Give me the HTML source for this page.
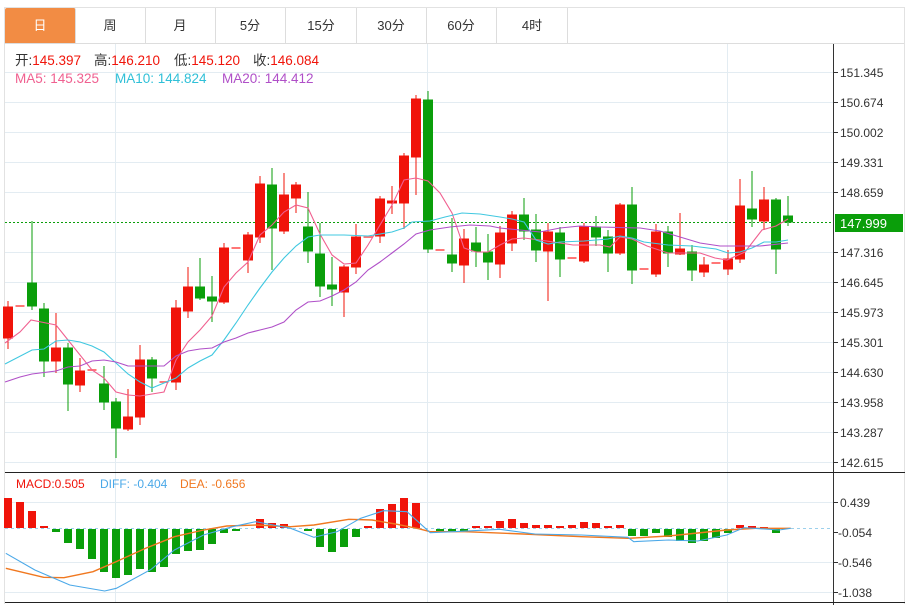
<!DOCTYPE html>
<html><head><meta charset="utf-8"><style>
body{margin:0;background:#fff;width:907px;height:605px;overflow:hidden;font-family:"Liberation Sans","Noto Sans CJK SC",sans-serif}
.tab{position:absolute;top:8px;height:35px;width:70px;border-right:1px solid #ddd;text-align:center;line-height:35px;font-size:13px;color:#333}
</style></head><body>
<div style="position:absolute;left:4px;top:7px;width:899px;height:596px;border:1px solid #e2e2e2;border-bottom:none"></div>
<div style="position:absolute;left:5px;top:43px;width:899px;height:1px;background:#ddd"></div>
<div class="tab" style="left:5px;background:#f28c44;color:#fff;border-radius:2px 2px 0 0">日</div>
<div class="tab" style="left:75px">周</div>
<div class="tab" style="left:145px">月</div>
<div class="tab" style="left:215px">5分</div>
<div class="tab" style="left:286px">15分</div>
<div class="tab" style="left:356px">30分</div>
<div class="tab" style="left:426px">60分</div>
<div class="tab" style="left:497px">4时</div>
<svg width="907" height="605" style="position:absolute;left:0;top:0" font-family="Liberation Sans,Noto Sans CJK SC,sans-serif">
<g stroke="#e3ecf2" stroke-width="1">
<line x1="5" x2="833" y1="72.5" y2="72.5"/><line x1="5" x2="833" y1="102.5" y2="102.5"/><line x1="5" x2="833" y1="132.5" y2="132.5"/><line x1="5" x2="833" y1="162.5" y2="162.5"/><line x1="5" x2="833" y1="192.5" y2="192.5"/><line x1="5" x2="833" y1="252.5" y2="252.5"/><line x1="5" x2="833" y1="282.5" y2="282.5"/><line x1="5" x2="833" y1="312.5" y2="312.5"/><line x1="5" x2="833" y1="342.5" y2="342.5"/><line x1="5" x2="833" y1="372.5" y2="372.5"/><line x1="5" x2="833" y1="402.5" y2="402.5"/><line x1="5" x2="833" y1="432.5" y2="432.5"/><line x1="5" x2="833" y1="462.5" y2="462.5"/>
<line x1="5" x2="833" y1="502.5" y2="502.5"/><line x1="5" x2="833" y1="562.5" y2="562.5"/><line x1="5" x2="833" y1="592.5" y2="592.5"/>
<line x1="115.5" x2="115.5" y1="44" y2="603"/><line x1="427.5" x2="427.5" y1="44" y2="603"/><line x1="727.5" x2="727.5" y1="44" y2="603"/>
</g>
<line x1="5" x2="833" y1="222.5" y2="222.5" stroke="#0a9e0a" stroke-dasharray="2,2"/>
<line x1="833.5" x2="833.5" y1="44" y2="605" stroke="#333"/>
<line x1="5" x2="905" y1="472.5" y2="472.5" stroke="#222"/>
<line x1="5" x2="905" y1="602.5" y2="602.5" stroke="#222"/>
<g stroke="#333"><line x1="833" x2="838" y1="72.5" y2="72.5"/><line x1="833" x2="838" y1="102.5" y2="102.5"/><line x1="833" x2="838" y1="132.5" y2="132.5"/><line x1="833" x2="838" y1="162.5" y2="162.5"/><line x1="833" x2="838" y1="192.5" y2="192.5"/><line x1="833" x2="838" y1="252.5" y2="252.5"/><line x1="833" x2="838" y1="282.5" y2="282.5"/><line x1="833" x2="838" y1="312.5" y2="312.5"/><line x1="833" x2="838" y1="342.5" y2="342.5"/><line x1="833" x2="838" y1="372.5" y2="372.5"/><line x1="833" x2="838" y1="402.5" y2="402.5"/><line x1="833" x2="838" y1="432.5" y2="432.5"/><line x1="833" x2="838" y1="462.5" y2="462.5"/><line x1="833" x2="838" y1="502.5" y2="502.5"/><line x1="833" x2="838" y1="532.5" y2="532.5"/><line x1="833" x2="838" y1="562.5" y2="562.5"/><line x1="833" x2="838" y1="592.5" y2="592.5"/></g>
<g font-size="12" fill="#333">
<text x="840" y="77">151.345</text><text x="840" y="107">150.674</text><text x="840" y="137">150.002</text><text x="840" y="167">149.331</text><text x="840" y="197">148.659</text><text x="840" y="257">147.316</text><text x="840" y="287">146.645</text><text x="840" y="317">145.973</text><text x="840" y="347">145.301</text><text x="840" y="377">144.630</text><text x="840" y="407">143.958</text><text x="840" y="437">143.287</text><text x="840" y="467">142.615</text>
<text x="840" y="507">0.439</text><text x="838" y="537">-0.054</text><text x="838" y="567">-0.546</text><text x="838" y="597">-1.038</text>
</g>
<rect x="835" y="214" width="68" height="18" fill="#0a9e0a"/>
<text x="840" y="228" font-size="13" fill="#fff">147.999</text>
<g stroke="#f0140a" fill="#f0140a" stroke-width="1">
<line x1="8" x2="8" y1="301" y2="349"/><rect x="3.5" y="307" width="9" height="31"/>
<line x1="56" x2="56" y1="313" y2="373"/><rect x="51.5" y="348" width="9" height="13"/>
<line x1="80" x2="80" y1="358" y2="392"/><rect x="75.5" y="371" width="9" height="14"/>
<line x1="128" x2="128" y1="389" y2="431"/><rect x="123.5" y="417" width="9" height="12"/>
<line x1="140" x2="140" y1="345" y2="425"/><rect x="135.5" y="360" width="9" height="57"/>
<line x1="176" x2="176" y1="300" y2="390"/><rect x="171.5" y="308" width="9" height="74"/>
<line x1="188" x2="188" y1="267" y2="318"/><rect x="183.5" y="287" width="9" height="24"/>
<line x1="224" x2="224" y1="243" y2="304"/><rect x="219.5" y="248" width="9" height="54"/>
<line x1="248" x2="248" y1="232" y2="273"/><rect x="243.5" y="235" width="9" height="25"/>
<line x1="260" x2="260" y1="176" y2="243"/><rect x="255.5" y="184" width="9" height="53"/>
<line x1="284" x2="284" y1="173" y2="234"/><rect x="279.5" y="195" width="9" height="36"/>
<line x1="296" x2="296" y1="182" y2="213"/><rect x="291.5" y="185" width="9" height="13"/>
<line x1="344" x2="344" y1="265" y2="317"/><rect x="339.5" y="267" width="9" height="25"/>
<line x1="356" x2="356" y1="224" y2="274"/><rect x="351.5" y="237" width="9" height="30"/>
<line x1="380" x2="380" y1="196" y2="243"/><rect x="375.5" y="199" width="9" height="37"/>
<line x1="392" x2="392" y1="186" y2="214"/><rect x="387.5" y="201" width="9" height="2"/>
<line x1="404" x2="404" y1="153" y2="229"/><rect x="399.5" y="156" width="9" height="47"/>
<line x1="416" x2="416" y1="95" y2="195"/><rect x="411.5" y="99" width="9" height="58"/>
<line x1="464" x2="464" y1="229" y2="283"/><rect x="459.5" y="239" width="9" height="26"/>
<line x1="500" x2="500" y1="226" y2="278"/><rect x="495.5" y="233" width="9" height="31"/>
<line x1="512" x2="512" y1="211" y2="251"/><rect x="507.5" y="215" width="9" height="28"/>
<line x1="548" x2="548" y1="223" y2="301"/><rect x="543.5" y="232" width="9" height="19"/>
<line x1="584" x2="584" y1="223" y2="263"/><rect x="579.5" y="227" width="9" height="34"/>
<line x1="620" x2="620" y1="203" y2="255"/><rect x="615.5" y="205" width="9" height="48"/>
<line x1="656" x2="656" y1="224" y2="277"/><rect x="651.5" y="232" width="9" height="42"/>
<line x1="680" x2="680" y1="213" y2="255"/><rect x="675.5" y="249" width="9" height="5"/>
<line x1="704" x2="704" y1="257" y2="277"/><rect x="699.5" y="265" width="9" height="7"/>
<line x1="728" x2="728" y1="250" y2="275"/><rect x="723.5" y="259" width="9" height="10"/>
<line x1="740" x2="740" y1="179" y2="263"/><rect x="735.5" y="206" width="9" height="53"/>
<line x1="764" x2="764" y1="187" y2="230"/><rect x="759.5" y="200" width="9" height="21"/>
</g>
<g fill="#f77">
<rect x="15.5" y="305" width="9" height="2"/><rect x="87.5" y="369" width="9" height="2"/><rect x="159.5" y="381" width="9" height="2"/><rect x="231.5" y="247" width="9" height="2"/><rect x="363.5" y="236" width="9" height="2"/><rect x="435.5" y="249" width="9" height="2"/><rect x="567.5" y="257" width="9" height="2"/><rect x="639.5" y="268" width="9" height="2"/><rect x="711.5" y="262" width="9" height="2"/>
</g>
<g stroke="#0a9e0a" fill="#0a9e0a">
<line x1="32" x2="32" y1="221" y2="310"/><rect x="27.5" y="283" width="9" height="23"/>
<line x1="44" x2="44" y1="303" y2="377"/><rect x="39.5" y="309" width="9" height="52"/>
<line x1="68" x2="68" y1="343" y2="411"/><rect x="63.5" y="348" width="9" height="36"/>
<line x1="104" x2="104" y1="366" y2="410"/><rect x="99.5" y="384" width="9" height="18"/>
<line x1="116" x2="116" y1="398" y2="458"/><rect x="111.5" y="402" width="9" height="26"/>
<line x1="152" x2="152" y1="357" y2="392"/><rect x="147.5" y="360" width="9" height="18"/>
<line x1="200" x2="200" y1="258" y2="300"/><rect x="195.5" y="287" width="9" height="11"/>
<line x1="212" x2="212" y1="276" y2="322"/><rect x="207.5" y="297" width="9" height="4"/>
<line x1="272" x2="272" y1="168" y2="270"/><rect x="267.5" y="185" width="9" height="43"/>
<line x1="308" x2="308" y1="192" y2="263"/><rect x="303.5" y="227" width="9" height="24"/>
<line x1="320" x2="320" y1="223" y2="297"/><rect x="315.5" y="254" width="9" height="32"/>
<line x1="332" x2="332" y1="257" y2="306"/><rect x="327.5" y="285" width="9" height="4"/>
<line x1="428" x2="428" y1="91" y2="253"/><rect x="423.5" y="100" width="9" height="149"/>
<line x1="452" x2="452" y1="218" y2="272"/><rect x="447.5" y="255" width="9" height="8"/>
<line x1="476" x2="476" y1="227" y2="267"/><rect x="471.5" y="243" width="9" height="8"/>
<line x1="488" x2="488" y1="234" y2="280"/><rect x="483.5" y="252" width="9" height="10"/>
<line x1="524" x2="524" y1="198" y2="240"/><rect x="519.5" y="215" width="9" height="16"/>
<line x1="536" x2="536" y1="214" y2="262"/><rect x="531.5" y="230" width="9" height="20"/>
<line x1="560" x2="560" y1="227" y2="277"/><rect x="555.5" y="233" width="9" height="26"/>
<line x1="596" x2="596" y1="216" y2="246"/><rect x="591.5" y="227" width="9" height="10"/>
<line x1="608" x2="608" y1="230" y2="272"/><rect x="603.5" y="237" width="9" height="16"/>
<line x1="632" x2="632" y1="187" y2="284"/><rect x="627.5" y="205" width="9" height="65"/>
<line x1="668" x2="668" y1="226" y2="267"/><rect x="663.5" y="232" width="9" height="21"/>
<line x1="692" x2="692" y1="245" y2="281"/><rect x="687.5" y="252" width="9" height="18"/>
<line x1="752" x2="752" y1="171" y2="227"/><rect x="747.5" y="209" width="9" height="10"/>
<line x1="776" x2="776" y1="198" y2="274"/><rect x="771.5" y="200" width="9" height="49"/>
<line x1="788" x2="788" y1="196" y2="226"/><rect x="783.5" y="216" width="9" height="6"/>
</g>
<g fill="none" stroke-width="1.1">
<polyline stroke="#f06090" points="5,343 20,332 31,320 56,325 68,340 92,370 104,378 116,392 128,395 140,396 164,392 176,360 188,342 200,330 212,316 224,287 236,273 248,262 260,235 272,225 284,212 296,205 308,208 320,234 332,255 344,264 356,263 368,245 380,225 392,205 404,180 416,178 428,181 440,193 452,213 464,248 476,252 488,252 500,245 512,239 524,238 540,240 560,243 573,245 600,245 610,247 620,237 632,239 647,246 668,253 700,253 715,258 727,260 745,252 762,230 776,226 788,219"/>
<polyline stroke="#40c8e0" points="5,364 32,350 44,349 56,341 68,340 80,342 92,346 104,352 116,363 128,374 140,382 152,388 164,383 176,378 188,368 200,361 212,355 224,340 236,323 248,305 260,288 272,272 284,258 296,246 308,237 320,235 344,235 368,236 392,232 404,228 412,222 430,221 445,217 462,213 480,214 500,217 512,219 524,222 536,240 548,244 560,242 584,241 608,239 620,236 632,238 644,242 668,245 692,246 716,249 728,253 740,252 752,248 764,242 776,242 788,240"/>
<polyline stroke="#b050c8" points="5,382 20,377 32,374 56,371 68,367 80,366 92,361 104,360 116,362 128,366 164,366 176,356 188,351 200,349 212,348 224,342 236,338 248,333 260,330 272,327 284,322 296,310 308,302 320,301 332,296 344,290 356,282 368,270 380,262 392,253 404,244 416,234 430,230 450,227 470,225 490,226 500,228 520,230 540,232 560,228 580,226 600,227 640,228 660,231 680,237 700,243 720,246 760,246 788,243"/>
</g>
<g font-size="13.5">
<text x="15" y="65" fill="#333">开:<tspan fill="#f0140a">145.397</tspan></text>
<text x="94" y="65" fill="#333">高:<tspan fill="#f0140a">146.210</tspan></text>
<text x="174" y="65" fill="#333">低:<tspan fill="#f0140a">145.120</tspan></text>
<text x="253" y="65" fill="#333">收:<tspan fill="#f0140a">146.084</tspan></text>
<text x="15" y="83" fill="#f06090">MA5: 145.325</text>
<text x="115" y="83" fill="#30c0d8">MA10: 144.824</text>
<text x="222" y="83" fill="#b050c8">MA20: 144.412</text>
</g>
<g font-size="12">
<text x="16" y="488" fill="#f0140a">MACD:0.505</text>
<text x="100" y="488" fill="#4aa8e8">DIFF: -0.404</text>
<text x="180" y="488" fill="#f07820">DEA: -0.656</text>
</g>
<line x1="5" x2="833" y1="528.5" y2="528.5" stroke="#9cd0ec" stroke-dasharray="3,3"/>
<g fill="#f0140a">
<rect x="4" y="498" width="8" height="30"/><rect x="16" y="502" width="8" height="26"/><rect x="28" y="511" width="8" height="17"/><rect x="40" y="526" width="8" height="2"/>
<rect x="256" y="519" width="8" height="9"/><rect x="268" y="523" width="8" height="5"/><rect x="280" y="524" width="8" height="4"/>
<rect x="364" y="526" width="8" height="2"/><rect x="376" y="509" width="8" height="19"/><rect x="388" y="504" width="8" height="24"/><rect x="400" y="498" width="8" height="30"/><rect x="412" y="503" width="8" height="25"/>
<rect x="472" y="526" width="8" height="2"/><rect x="484" y="526" width="8" height="2"/><rect x="496" y="521" width="8" height="7"/><rect x="508" y="519" width="8" height="9"/><rect x="520" y="523" width="8" height="5"/><rect x="532" y="525" width="8" height="3"/><rect x="544" y="525" width="8" height="3"/><rect x="556" y="526" width="8" height="2"/><rect x="568" y="525" width="8" height="3"/><rect x="580" y="522" width="8" height="6"/><rect x="592" y="523" width="8" height="5"/><rect x="604" y="526" width="8" height="2"/><rect x="616" y="525" width="8" height="3"/>
<rect x="736" y="525" width="8" height="3"/><rect x="748" y="526" width="8" height="2"/><rect x="760" y="527" width="8" height="1"/>
</g>
<g fill="#0a9e0a">
<rect x="52" y="529" width="8" height="3"/><rect x="64" y="529" width="8" height="14"/><rect x="76" y="529" width="8" height="20"/><rect x="88" y="529" width="8" height="30"/><rect x="100" y="529" width="8" height="43"/><rect x="112" y="529" width="8" height="49"/><rect x="124" y="529" width="8" height="46"/><rect x="136" y="529" width="8" height="40"/><rect x="148" y="529" width="8" height="43"/><rect x="160" y="529" width="8" height="38"/><rect x="172" y="529" width="8" height="25"/><rect x="184" y="529" width="8" height="22"/><rect x="196" y="529" width="8" height="21"/><rect x="208" y="529" width="8" height="15"/><rect x="220" y="529" width="8" height="4"/><rect x="232" y="529" width="8" height="2"/>
<rect x="304" y="529" width="8" height="2"/><rect x="316" y="529" width="8" height="18"/><rect x="328" y="529" width="8" height="23"/><rect x="340" y="529" width="8" height="18"/><rect x="352" y="529" width="8" height="8"/>
<rect x="436" y="529" width="8" height="2"/><rect x="448" y="529" width="8" height="2"/><rect x="460" y="529" width="8" height="2"/>
<rect x="628" y="529" width="8" height="7"/><rect x="640" y="529" width="8" height="7"/><rect x="652" y="529" width="8" height="4"/><rect x="664" y="529" width="8" height="8"/><rect x="676" y="529" width="8" height="12"/><rect x="688" y="529" width="8" height="14"/><rect x="700" y="529" width="8" height="12"/><rect x="712" y="529" width="8" height="9"/><rect x="724" y="529" width="8" height="4"/><rect x="772" y="529" width="8" height="4"/>
</g>
<g transform="translate(0,460) scale(0.5814,0.33333)" fill="none">
<polyline vector-effect="non-scaling-stroke" stroke="#f07820" stroke-width="1.4" points="10,325 75,352 110,353 160,335 200,305 250,265 300,230 350,210 390,198 440,195 500,200 540,195 600,178 640,180 680,192 720,206 740,215 800,215 900,222 1000,230 1080,235 1150,228 1250,210 1300,205 1360,205"/>
<polyline vector-effect="non-scaling-stroke" stroke="#4aa8e8" stroke-width="1.1" points="10,280 60,330 120,375 180,393 200,385 260,328 300,270 350,225 400,200 440,185 470,195 500,205 540,232 580,215 620,175 660,152 700,155 740,218 780,215 860,208 920,222 1000,225 1080,232 1090,245 1150,240 1200,243 1250,225 1280,203 1340,210 1360,205"/>
</g>
</svg>
</body></html>
